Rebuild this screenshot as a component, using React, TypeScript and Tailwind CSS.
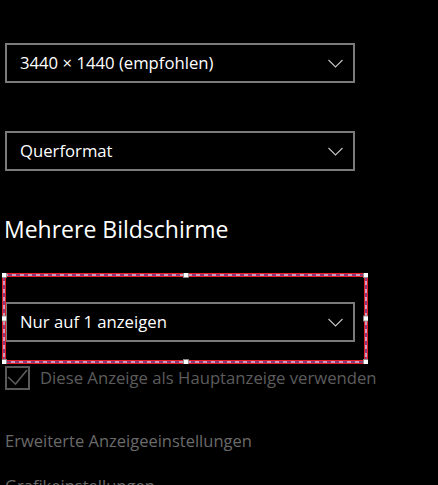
import React from 'react';

const font = { fontFamily: '"Open Sans", "Noto Sans", sans-serif' };

const Chevron = () => (
  <svg width="15" height="9" viewBox="0 0 15 9" className="shrink-0">
    <polyline points="0.5,1 7.5,8 14.5,1" fill="none" stroke="#c4c4c4" strokeWidth="1.1" />
  </svg>
);

const Dropdown = ({ label }: { label: string }) => (
  <div className="flex h-[40px] w-[350px] items-center justify-between border-2 border-[#7a7a7a] bg-black pl-[13px] pr-[10px]">
    <span className="text-[16.7px] text-white">{label}</span>
    <Chevron />
  </div>
);

// selection frame drawn over the third combobox row
const Selection = () => {
  const handles = [
    [2, 2], [184, 2], [364, 2],
    [2, 45.5], [364, 45.5],
    [2, 89], [184, 89], [364, 89],
  ];
  return (
    <svg width="366" height="91" className="pointer-events-none absolute left-0 top-0">
      <rect x="2" y="2" width="362" height="87" fill="none" stroke="#ea1c24" strokeWidth="4" />
      <rect x="2" y="2" width="362" height="87" fill="none" stroke="#2d5bd6" strokeWidth="1" />
      <rect x="2" y="2" width="362" height="87" fill="none" stroke="#ffffff" strokeWidth="1" strokeDasharray="4 4" />
      {handles.map(([cx, cy], i) => (
        <rect key={i} x={cx - 2.5} y={cy - 2.5} width="5" height="5" fill="#ffffff" stroke="#8a8a8a" strokeWidth="0.8" />
      ))}
    </svg>
  );
};

export default function App() {
  return (
    <div className="h-[485px] w-[438px] overflow-hidden bg-black" style={font}>
      <div className="flex flex-col pt-[43px]">
        <div className="pl-[5px]">
          <Dropdown label="3440 × 1440 (empfohlen)" />
        </div>
        <div className="mt-[48px] pl-[5px]">
          <Dropdown label="Querformat" />
        </div>

        <h2 className="mt-[42px] pl-[4px] text-[23px] font-normal leading-[32px] text-white">
          Mehrere Bildschirme
        </h2>

        <div className="relative ml-[2px] mt-[28px] h-[91px] w-[366px] pl-[3px] pt-[29px]">
          <Dropdown label="Nur auf 1 anzeigen" />
          <Selection />
        </div>

        <div className="mt-[1px] flex items-center gap-[10px] pl-[5px]">
          <div className="h-[24px] w-[25px] border-2 border-[#5a5a5a]">
            <svg width="21" height="20" viewBox="0 0 21 20">
              <polyline points="1,9 8.5,16 20,2" fill="none" stroke="#5a5a5a" strokeWidth="1.6" />
            </svg>
          </div>
          <span className="text-[16.7px] text-[#5c5c5c]">Diese Anzeige als Hauptanzeige verwenden</span>
        </div>

        <div className="mt-[39px] pl-[5px] text-[16.5px] text-[#6a6a6a]">Erweiterte Anzeigeeinstellungen</div>
        <div className="mt-[20px] pl-[5px] text-[16.5px] text-[#6a6a6a]">Grafikeinstellungen</div>
      </div>
    </div>
  );
}
